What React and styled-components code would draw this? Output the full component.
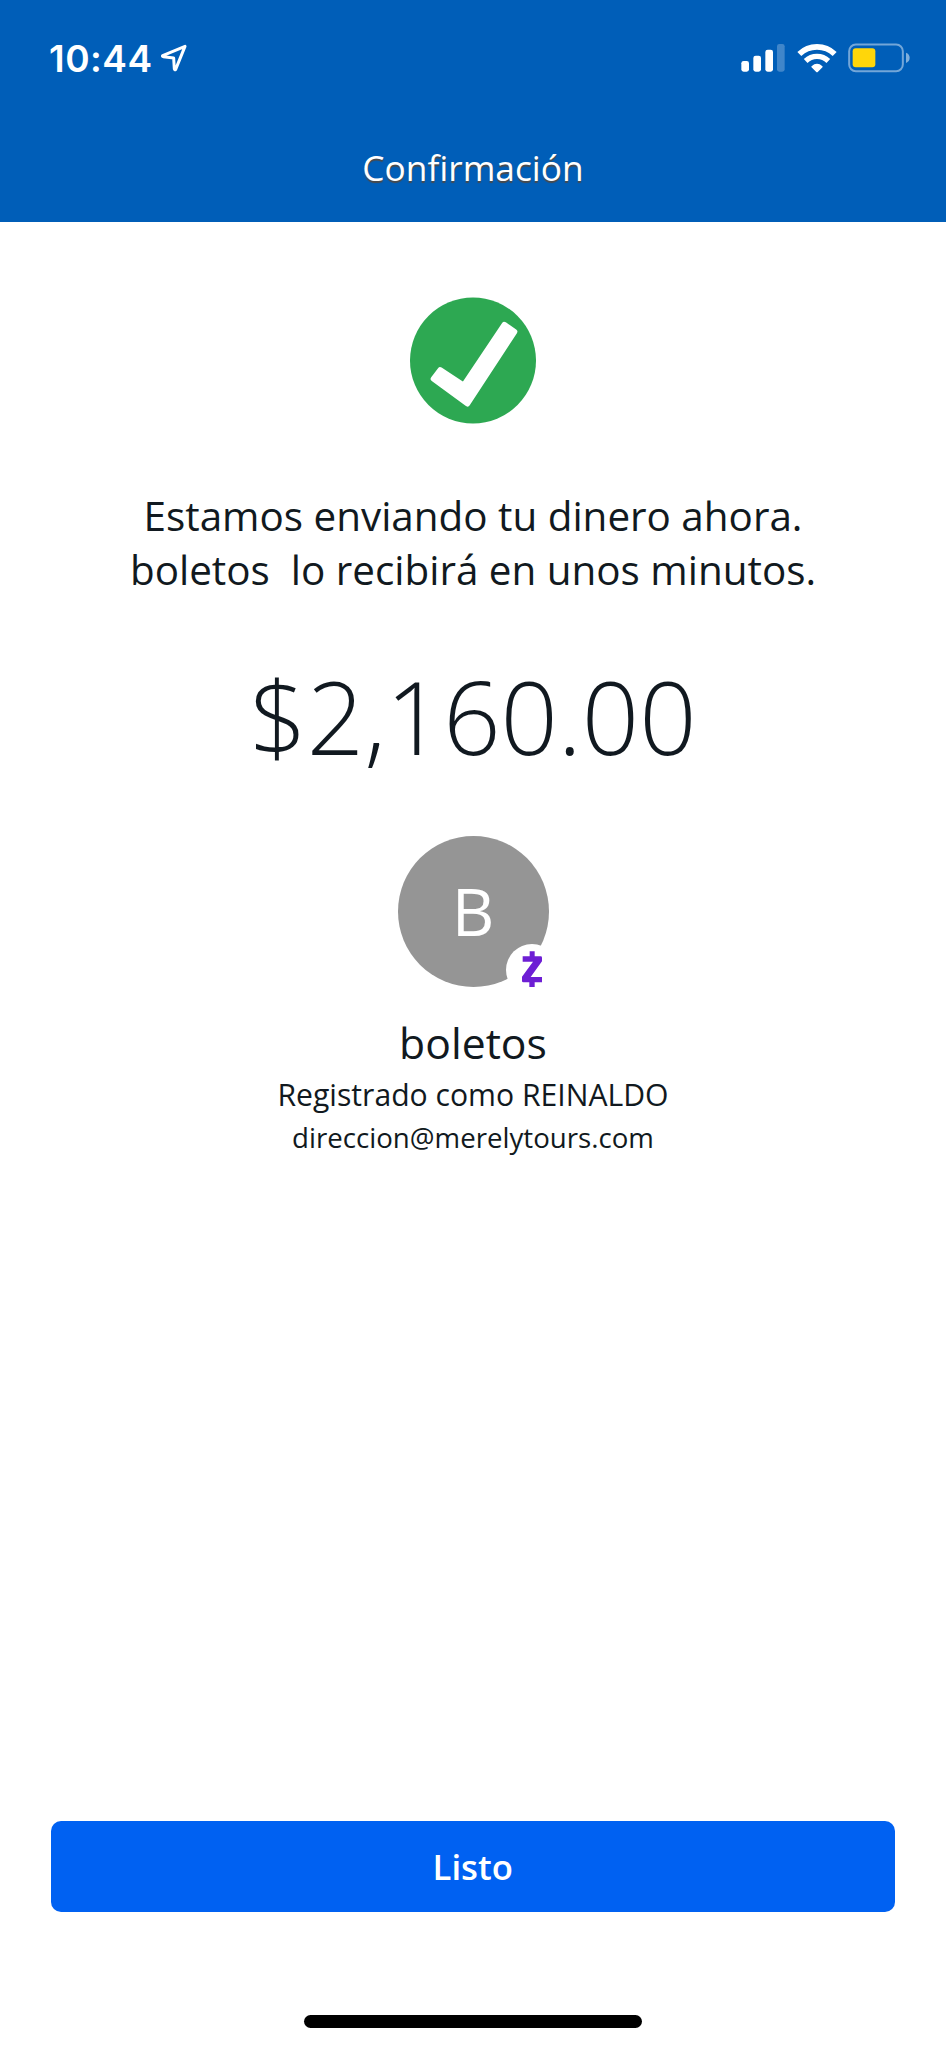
import React from "react";
import styled, { createGlobalStyle } from "styled-components";

const GlobalStyle = createGlobalStyle`
  body { margin: 0; background: #fff; }
  *, *::before, *::after { box-sizing: border-box; }
`;

const Screen = styled.div`
  display: flex;
  flex-direction: column;
  width: 946px;
  height: 2048px;
  overflow: hidden;
  background: #fff;
  color: #111920;
  font-family: "Open Sans", "Noto Sans", sans-serif;
`;

const Header = styled.header`
  height: 222px;
  background: #005eb8;
  color: #fff;
`;

const StatusBar = styled.div`
  display: flex;
  justify-content: space-between;
  align-items: center;
  height: 116px;
  padding: 0 36px 0 49px;
`;

const StatusGroup = styled.div`
  display: flex;
  align-items: center;
  gap: ${(p) => p.$gap}px;
`;

const Time = styled.span`
  padding-top: 1px;
  font: 600 37px/44px Inter, sans-serif;
  letter-spacing: 0.5px;
`;

const Icon = styled.svg`
  display: block;
  flex: none;
`;

const Title = styled.h1`
  margin: 0;
  font-size: 35.3px;
  font-weight: 400;
  line-height: 103px;
  text-align: center;
  text-shadow: 0 2px 1px #4a4a4a;
`;

const Content = styled.main`
  flex: 1;
  display: flex;
  flex-direction: column;
  align-items: center;
  padding-top: 75px;
`;

const Message = styled.p`
  margin: 65px 0 0;
  font-size: 40.4px;
  line-height: 54px;
  text-align: center;
  white-space: pre;
`;

const Amount = styled.div`
  margin-top: 59px;
  font-size: 100.5px;
  font-weight: 300;
  line-height: 120px;
`;

const Avatar = styled.div`
  position: relative;
  width: 151px;
  height: 151px;
  margin-top: 60px;
  border-radius: 50%;
  background: #959595;
  color: #fff;
  font-size: 66px;
  line-height: 148px;
  text-align: center;
`;

const Badge = styled.span`
  position: absolute;
  right: -9px;
  bottom: -9px;
  display: flex;
  align-items: center;
  justify-content: center;
  width: 52px;
  height: 52px;
  padding-bottom: 2px;
  border-radius: 50%;
  background: #fff;
`;

const Name = styled.div`
  margin-top: 31px;
  font-size: 42.7px;
  line-height: 50px;
`;

const Detail = styled.div`
  margin-top: ${(p) => p.$top || 0}px;
  font-size: ${(p) => p.$size}px;
  line-height: 42px;
`;

const Footer = styled.footer`
  display: flex;
  flex-direction: column;
  align-items: center;
  padding: 0 51px 20px 50.5px;
`;

const DoneButton = styled.button`
  width: 100%;
  height: 91px;
  margin: 0 0 103px;
  padding: 0;
  border: 0;
  border-radius: 10px;
  background: #0061f2;
  color: #fff;
  font: 600 34.7px/91px "Open Sans", sans-serif;
`;

const HomeIndicator = styled.div`
  width: 338px;
  height: 13px;
  border-radius: 7px;
  background: #000;
`;

const LocationIcon = () => (
  <Icon width="26" height="28" viewBox="393 72 78 84" fill="none">
    <path d="M398 107L465 79L437 148Q434 151 433 147L431 114L400 110Q396 109 398 107Z" stroke="#fff" strokeWidth="9" strokeLinejoin="round" />
  </Icon>
);

const SignalIcon = () => (
  <Icon width="44" height="28" viewBox="63 73 132 84" fill="#fff">
    <rect x="64" y="124" width="23" height="32" rx="7" />
    <rect x="100" y="108" width="23" height="48" rx="7" />
    <rect x="136" y="90" width="23" height="66" rx="7" />
    <rect x="171" y="73" width="23" height="83" rx="7" opacity="0.25" />
  </Icon>
);

const WifiIcon = () => (
  <Icon width="40" height="30" viewBox="230 68 120 90" fill="none" stroke="#fff">
    <path d="M237 101A76 76 0 0 1 343 101" strokeWidth="17" />
    <path d="M256 122A49 49 0 0 1 324 122" strokeWidth="16" />
    <path d="M290 154L275 139Q290 126 305 139Z" fill="#fff" strokeWidth="4" strokeLinejoin="round" />
  </Icon>
);

const BatteryIcon = () => (
  <Icon width="62" height="30" viewBox="385 70 186 90">
    <rect x="388.500" y="74.500" width="161" height="80" rx="20" fill="none" stroke="#fff" strokeOpacity="0.45" strokeWidth="6" />
    <rect x="399" y="86" width="68" height="57" rx="9" fill="#ffd60a" />
    <path d="M559 99Q570 103 570 114.500Q570 126 559 130Z" fill="#fff" fillOpacity="0.5" />
  </Icon>
);

const SuccessIcon = () => (
  <Icon width="126" height="127" viewBox="61 52 378 380">
    <circle cx="250" cy="242" r="189" fill="#2da852" />
    <path d="M344 134L375 155.500L233.500 372L131 297L151.500 270L222 316Z" fill="#fff" stroke="#fff" strokeWidth="16" strokeLinejoin="round" />
  </Icon>
);

const ZelleIcon = () => (
  <Icon width="20" height="36" viewBox="426 393 60 108" fill="#6d1ed4">
    <path d="M449 394H464V409H482Q486 409 486 413V424L452 471H486V487H464V501H448V487H430Q426 487 426 483V470L459 425H428V409H449Z" />
  </Icon>
);

export default function App() {
  return (
    <Screen>
      <GlobalStyle />
      <Header>
        <StatusBar>
          <StatusGroup $gap={8}>
            <Time>10:44</Time>
            <LocationIcon />
          </StatusGroup>
          <StatusGroup $gap={11.5}>
            <SignalIcon />
            <WifiIcon />
            <BatteryIcon />
          </StatusGroup>
        </StatusBar>
        <Title>Confirmación</Title>
      </Header>
      <Content>
        <SuccessIcon />
        <Message>{"Estamos enviando tu dinero ahora.\nboletos  lo recibirá en unos minutos."}</Message>
        <Amount>$2,160.00</Amount>
        <Avatar>
          B
          <Badge>
            <ZelleIcon />
          </Badge>
        </Avatar>
        <Name>boletos</Name>
        <Detail $size={30.15} $top={5.5}>Registrado como REINALDO</Detail>
        <Detail $size={27.65} $top={0.5}>direccion@merelytours.com</Detail>
      </Content>
      <Footer>
        <DoneButton type="button">Listo</DoneButton>
        <HomeIndicator />
      </Footer>
    </Screen>
  );
}
